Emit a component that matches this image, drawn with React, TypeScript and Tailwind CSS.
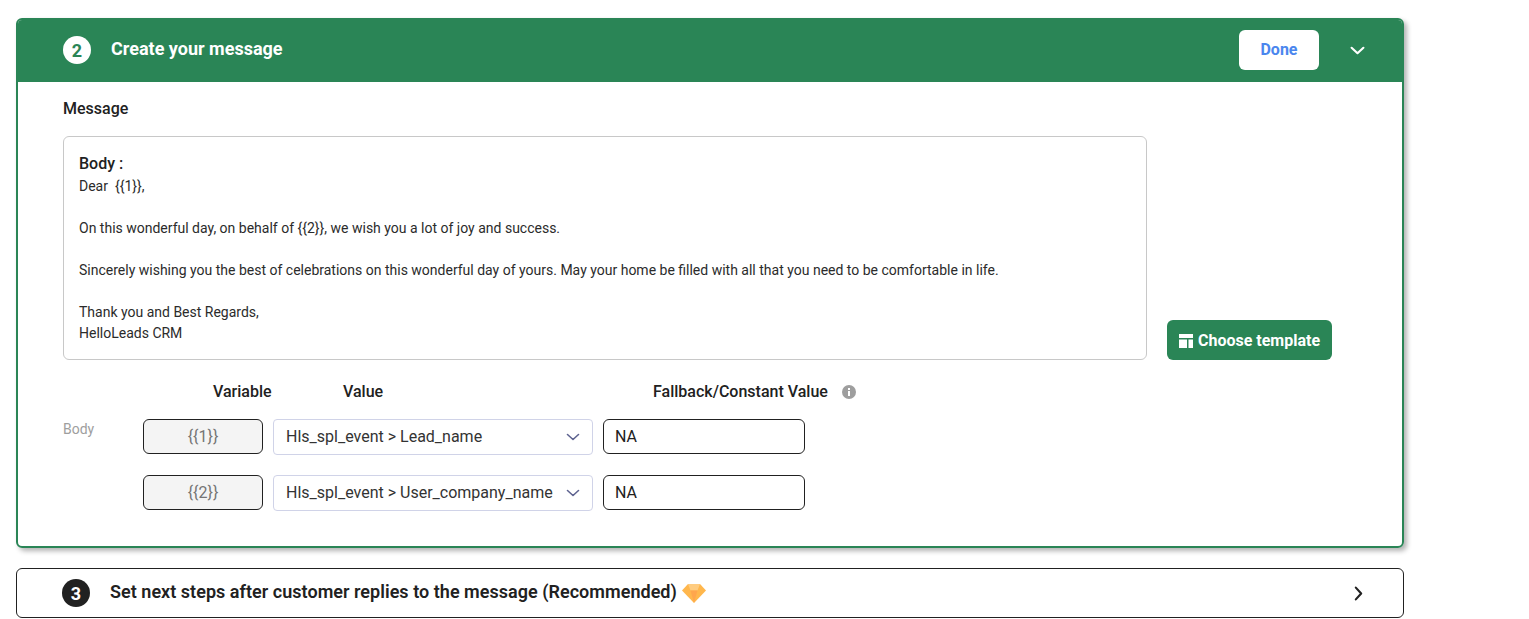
import React from "react";

const Caret = ({ className, w = 1.6 }: { className: string; w?: number }) => (
  <svg viewBox="0 0 14 8" fill="none" stroke="currentColor" strokeWidth={w} strokeLinecap="round" strokeLinejoin="round" className={className}>
    <path d="M1.500 1.500 7 6.500l5.500-5" />
  </svg>
);

const rows = [
  { v: "{{1}}", s: "Hls_spl_event > Lead_name", label: "Body" },
  { v: "{{2}}", s: "Hls_spl_event > User_company_name", label: "" },
];

export default function App() {
  return (
    <div className="h-[619px] overflow-hidden bg-white pl-4 pt-[18px] font-['Roboto',sans-serif] text-[#212121]">
      <div className="w-[1388px] h-[530px] rounded-[6px] border-2 border-[#2a8556] shadow-[3px_3px_5px_rgba(0,0,0,0.3)] overflow-hidden">
        <div className="h-[64px] -mt-[2px] bg-[#2a8556] flex items-center pl-[45px] pr-[37px]">
          <div className="w-7 h-7 rounded-full bg-white text-[#2a8556] flex items-center justify-center text-[18px] font-bold">2</div>
          <div className="ml-5 mb-[4px] text-[18px] font-bold text-white">Create your message</div>
          <button className="ml-auto w-20 h-10 rounded-[6px] bg-white text-[#4a86ee] text-[16px] font-bold">Done</button>
          <Caret w={2} className="ml-[31px] w-[15px] h-[9px] text-white" />
        </div>
        <div className="pl-[45px] pt-[15px]">
          <div className="text-[16px] leading-6 font-medium">Message</div>
          <div className="mt-[15px] flex items-end gap-5">
            <div className="w-[1084px] h-[224px] rounded-[6px] border border-[#c8c8c8] pl-[15px] pt-[15px] text-[14px] leading-[21px] text-[#2b2b2b]">
              <div className="text-[16px] leading-[24px] font-medium text-[#212121]">Body :</div>
              <div>Dear&nbsp; {"{{1}}"},</div>
              <div className="mt-[21px]">On this wonderful day, on behalf of {"{{2}}"}, we wish you a lot of joy and success.</div>
              <div className="mt-[21px]">Sincerely wishing you the best of celebrations on this wonderful day of yours. May your home be filled with all that you need to be comfortable in life.</div>
              <div className="mt-[21px]">Thank you and Best Regards,</div>
              <div>HelloLeads CRM</div>
            </div>
            <button className="w-[165px] h-10 pt-[1px] rounded-[6px] bg-[#2a8556] text-white text-[16px] font-bold flex items-center justify-center gap-[5px]">
              <svg viewBox="0 0 14 14" className="w-[14px] h-[14px]" fill="currentColor">
                <path d="M0 0h14v4H0zM0 5.500h8V14H0zM9.500 5.500H14V14H9.500z" />
              </svg>
              Choose template
            </button>
          </div>
          <div className="mt-[20px] flex h-6 items-center text-[16px] font-medium">
            <div className="ml-[150px] w-[130px]">Variable</div>
            <div className="w-[310px]">Value</div>
            <div>Fallback/Constant Value</div>
            <svg viewBox="0 0 14 14" className="ml-[14px] w-[14px] h-[14px]">
              <circle cx="7" cy="7" r="7" fill="#9e9e9e" />
              <rect x="6" y="6" width="2" height="5" fill="#fff" />
              <rect x="6" y="3" width="2" height="2" fill="#fff" />
            </svg>
          </div>
          <div className="mt-[15px] flex flex-col gap-[21px]">
            {rows.map((r) => (
              <div key={r.v} className="flex h-[35px]">
                <div className="w-20 text-[14px] leading-5 text-[#9e9e9e]">{r.label}</div>
                <div className="w-[120px] h-[35px] rounded-[6px] border border-[#212121] bg-[#f4f4f4] text-[#757575] text-[16px] flex items-center justify-center">{r.v}</div>
                <div className="ml-[10px] w-[320px] h-[36px] rounded-[4px] border border-[#d0d3e8] bg-white flex items-center pl-[12px] pr-[12px] text-[16px] text-[#333]">
                  <span>{r.s}</span>
                  <Caret className="ml-auto w-[14px] h-[8px] text-[#5e6390]" />
                </div>
                <div className="ml-[10px] w-[202px] h-[35px] rounded-[6px] border border-[#212121] flex items-center pl-[11px] text-[16px] text-[#212121]">NA</div>
              </div>
            ))}
          </div>
        </div>
      </div>
      <div className="mt-5 w-[1388px] h-[50px] rounded-[6px] border border-[#212121] flex items-center pl-[45px] pr-[37px]">
        <div className="w-7 h-7 rounded-full bg-[#212121] text-white flex items-center justify-center text-[18px] font-bold">3</div>
        <div className="ml-5 mb-[3px] text-[18px] font-semibold tracking-[0.03px]">Set next steps after customer replies to the message (Recommended)</div>
        <svg viewBox="0 0 24 20" className="ml-[5px] mb-[1px] w-6 h-[22px]">
          <path d="M6 1h12l6 6.500L12 20 0 7.500z" fill="#ffb74d" />
          <path d="M6 1h12l-2.500 6.500h-7z" fill="#ffcc80" />
          <path d="M8.500 7.500h7L12 20z" fill="#ffa64d" />
        </svg>
        <Caret w={2} className="ml-auto w-[15px] h-[9px] rotate-[-90deg] text-[#212121]" />
      </div>
    </div>
  );
}
